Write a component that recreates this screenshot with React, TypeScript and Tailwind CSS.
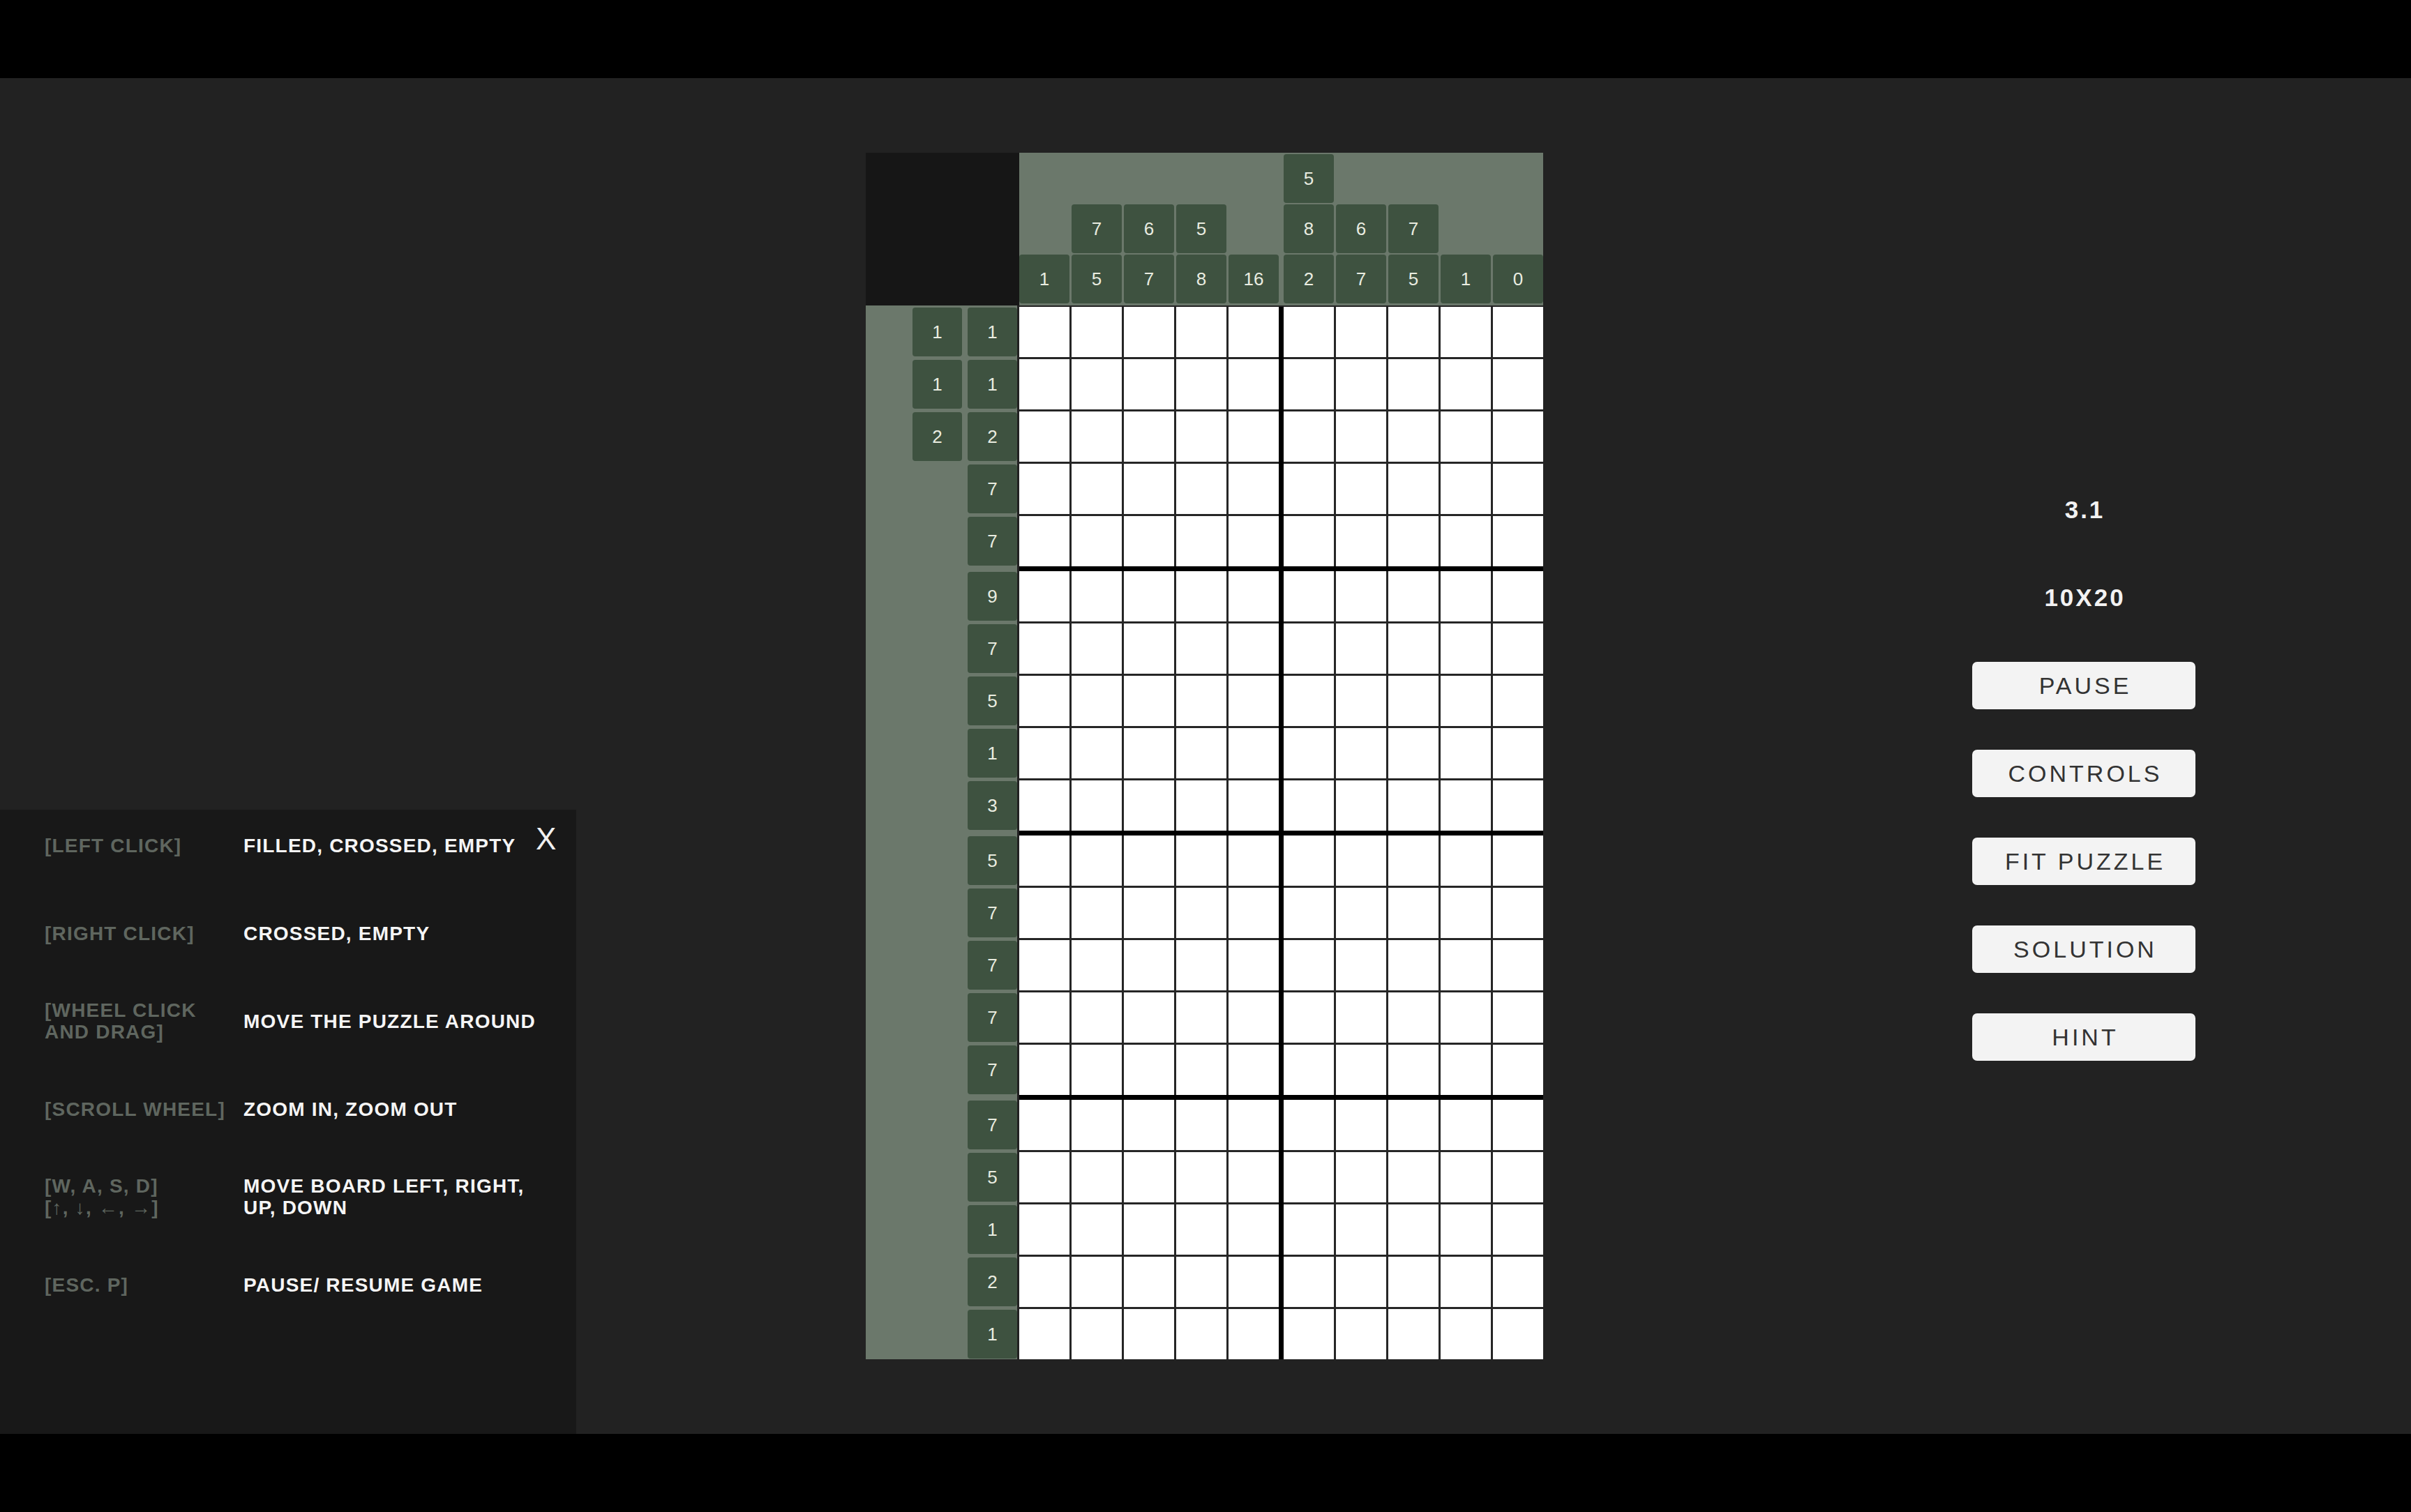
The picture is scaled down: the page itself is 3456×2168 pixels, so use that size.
import React from "react";

// nonogram puzzle data: column clues read top → bottom, row clues left → right
const colClues: number[][] = [[1], [7, 5], [6, 7], [5, 8], [16], [5, 8, 2], [6, 7], [7, 5], [1], [0]];
const rowClues: number[][] = [
  [1, 1], [1, 1], [2, 2], [7], [7], [9], [7], [5], [1], [3],
  [5], [7], [7], [7], [7], [7], [5], [1], [2], [1],
];

const controls = [
  { keys: ["[LEFT CLICK]"], action: ["FILLED, CROSSED, EMPTY"] },
  { keys: ["[RIGHT CLICK]"], action: ["CROSSED, EMPTY"] },
  { keys: ["[WHEEL CLICK", "AND DRAG]"], action: ["MOVE THE PUZZLE AROUND"] },
  { keys: ["[SCROLL WHEEL]"], action: ["ZOOM IN, ZOOM OUT"] },
  { keys: ["[W, A, S, D]", "[↑, ↓, ←, →]"], action: ["MOVE BOARD LEFT, RIGHT,", "UP, DOWN"] },
  { keys: ["[ESC. P]"], action: ["PAUSE/ RESUME GAME"] },
];

const menu = ["PAUSE", "CONTROLS", "FIT PUZZLE", "SOLUTION", "HINT"];

function ClueTile({ value, className = "" }: { value: number; className?: string }) {
  return (
    <div
      className={`flex items-center justify-center rounded-[4px] bg-[#3e5240] text-[26px] text-[#e9ece0] ${className}`}
    >
      {value}
    </div>
  );
}

function ColumnClues() {
  const groups = [colClues.slice(0, 5), colClues.slice(5)];
  return (
    <div className="flex h-[219px] gap-[7px] bg-[#6b786b] pt-[2px] pb-[3px]">
      {groups.map((group, g) => (
        <div key={g} className="flex gap-[3px]">
          {group.map((clue, i) => (
            <div key={i} className="flex w-[72px] flex-col justify-end gap-[2px]">
              {clue.map((n, j) => (
                <ClueTile key={j} value={n} className="h-[70px] w-full" />
              ))}
            </div>
          ))}
        </div>
      ))}
    </div>
  );
}

function RowClues() {
  const blocks = [0, 1, 2, 3].map((b) => rowClues.slice(b * 5, b * 5 + 5));
  return (
    <div className="flex w-[217px] flex-col gap-[7px] bg-[#6b786b] pt-[2px]">
      {blocks.map((block, b) => (
        <div key={b} className="flex flex-col gap-[3px]">
          {block.map((clue, i) => (
            <div key={i} className="flex h-[72px] items-center justify-end gap-[8px]">
              {clue.map((n, j) => (
                <ClueTile key={j} value={n} className="h-[70px] w-[71px]" />
              ))}
            </div>
          ))}
        </div>
      ))}
    </div>
  );
}

function Board() {
  // 2 x 4 blocks of 5 x 5 cells, thick black lines between blocks
  return (
    <div className="grid grid-cols-[repeat(2,auto)] gap-[7px] border-t-[2px] border-l-[3px] border-[#222] bg-black">
      {Array.from({ length: 8 }).map((_, b) => (
        <div key={b} className="grid grid-cols-[repeat(5,72px)] gap-[3px] bg-[#262626]">
          {Array.from({ length: 25 }).map((_, c) => (
            <div key={c} className="h-[72px] w-[72px] bg-white" />
          ))}
        </div>
      ))}
    </div>
  );
}

function Puzzle() {
  return (
    <div className="mt-[107px] ml-[1241px] flex flex-col">
      <div className="flex">
        <div className="h-[219px] w-[220px] bg-[#161616]" />
        <ColumnClues />
      </div>
      <div className="flex">
        <RowClues />
        <Board />
      </div>
    </div>
  );
}

function SideMenu() {
  return (
    <div className="mt-[585px] ml-[615px] flex w-[320px] flex-col gap-[58px]">
      <div className="flex h-[68px] items-center justify-center pl-[3px] text-[35px] font-bold tracking-[3px] text-[#f2f2f2]">
        3.1
      </div>
      <div className="flex h-[68px] items-center justify-center pl-[3px] text-[35px] font-bold tracking-[3px] text-[#f2f2f2]">
        10X20
      </div>
      {menu.map((label) => (
        <button
          key={label}
          className="flex h-[68px] w-[320px] items-center justify-center rounded-[7px] bg-[#f3f3f3] pl-[4px] text-[34px] tracking-[4px] text-[#333]"
        >
          {label}
        </button>
      ))}
    </div>
  );
}

function ControlsPanel() {
  return (
    <div className="absolute bottom-0 left-0 h-[895px] w-[826px] bg-[#181818] pt-[20px] pl-[64px]">
      <button className="absolute top-[20px] left-[768px] text-[44px] leading-none text-[#f0f0f0]">X</button>
      <div className="flex flex-col gap-[64px]">
        {controls.map((row, i) => (
          <div key={i} className="flex h-[62px] items-center text-[28px] leading-[31px] font-bold tracking-[1.2px]">
            <div className="w-[285px] text-[#5f665f]">
              {row.keys.map((k) => (
                <div key={k}>{k}</div>
              ))}
            </div>
            <div className="text-[#f5f5f5]">
              {row.action.map((a) => (
                <div key={a}>{a}</div>
              ))}
            </div>
          </div>
        ))}
      </div>
    </div>
  );
}

export default function App() {
  return (
    <div className="flex h-[2168px] w-[3456px] flex-col bg-black font-['Liberation_Sans',Arial,sans-serif]">
      <div className="h-[112px] shrink-0 bg-black" />
      <main className="relative flex flex-1 items-start bg-[#222]">
        <Puzzle />
        <SideMenu />
        <ControlsPanel />
      </main>
      <div className="h-[112px] shrink-0 bg-black" />
    </div>
  );
}
